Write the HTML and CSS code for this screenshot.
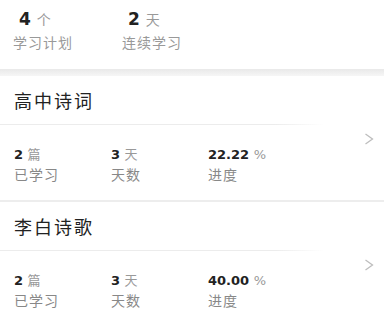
FILE: index.html
```html
<!DOCTYPE html>
<html lang="zh">
<head>
  <meta charset="UTF-8" />
  <title>学习计划</title>
  <link rel="stylesheet" href="styles.css">
</head>
<body>

  <div class="summary">
    <div class="summary-item">
      <div class="summary-num">4 <span class="unit">个</span></div>
      <div class="summary-label">学习计划</div>
    </div>
    <div class="summary-item">
      <div class="summary-num">2 <span class="unit">天</span></div>
      <div class="summary-label">连续学习</div>
    </div>
  </div>

  <div class="band"></div>

  <div class="plan">
    <div class="plan-body">
      <div class="plan-title">高中诗词</div>
      <div class="plan-stats">
        <div class="stat">
          <div class="stat-num">2 <span class="unit">篇</span></div>
          <div class="stat-label">已学习</div>
        </div>
        <div class="stat">
          <div class="stat-num">3 <span class="unit">天</span></div>
          <div class="stat-label">天数</div>
        </div>
        <div class="stat">
          <div class="stat-num">22.22 <span class="unit">%</span></div>
          <div class="stat-label">进度</div>
        </div>
      </div>
    </div>
    <div class="plan-arrow">
      <svg width="10" height="12" viewBox="0 0 10 12"><polyline points="1.5,1 8.5,6 1.5,11" fill="none" stroke="#bdbdbd" stroke-width="1.3"/></svg>
    </div>
  </div>

  <div class="gap"></div>

  <div class="plan">
    <div class="plan-body">
      <div class="plan-title">李白诗歌</div>
      <div class="plan-stats">
        <div class="stat">
          <div class="stat-num">2 <span class="unit">篇</span></div>
          <div class="stat-label">已学习</div>
        </div>
        <div class="stat">
          <div class="stat-num">3 <span class="unit">天</span></div>
          <div class="stat-label">天数</div>
        </div>
        <div class="stat">
          <div class="stat-num">40.00 <span class="unit">%</span></div>
          <div class="stat-label">进度</div>
        </div>
      </div>
    </div>
    <div class="plan-arrow">
      <svg width="10" height="12" viewBox="0 0 10 12"><polyline points="1.5,1 8.5,6 1.5,11" fill="none" stroke="#bdbdbd" stroke-width="1.3"/></svg>
    </div>
  </div>

</body>
</html>
```

FILE: styles.css
```css
body {
  margin: 0;
  background: white;
  font-family: "DejaVu Sans", "Noto Sans CJK SC", sans-serif;
  color: #222;
}

/* top summary */
.summary {
  display: flex;
  height: 69px;
  padding: 9px 0 0 13px;
  box-sizing: border-box;
}
.summary-item {
  width: 109px;
}
.summary-num {
  font-size: 17px;
  font-weight: bold;
  line-height: 20px;
  padding-left: 6px;
}
.summary-num .unit {
  font-size: 14px;
}
.summary-label {
  font-size: 14px;
  letter-spacing: 1px;
  color: #999;
  line-height: 18px;
  margin-top: 4px;
}
.unit {
  font-weight: normal;
  color: #999;
}

.band {
  height: 7px;
  background: linear-gradient(#e9e9e9, #f6f6f6);
}
.gap {
  height: 2px;
  background: #ededed;
}

/* plan card */
.plan {
  display: flex;
  height: 124px;
}
.plan-body {
  width: 323px;
}
.plan-title {
  height: 48px;
  display: flex;
  align-items: center;
  padding-left: 14px;
  font-size: 18px;
  letter-spacing: 2px;
  color: #222;
  border-bottom: 1px solid;
  border-image: linear-gradient(to right, #ececec 85%, rgba(236,236,236,0)) 1;
}
.plan-stats {
  display: flex;
  padding: 21px 0 0 14px;
}
.stat {
  width: 97px;
}
.stat-num {
  font-size: 13px;
  font-weight: bold;
  line-height: 18px;
}
.stat-num .unit {
  font-size: 13px;
}
.stat-label {
  font-size: 14px;
  letter-spacing: 1px;
  color: #888;
  line-height: 18px;
  margin-top: 2px;
}
.plan-arrow {
  flex: 1;
  display: flex;
  align-items: center;
  justify-content: flex-end;
  padding-right: 10px;
  padding-top: 1px;
}
```
